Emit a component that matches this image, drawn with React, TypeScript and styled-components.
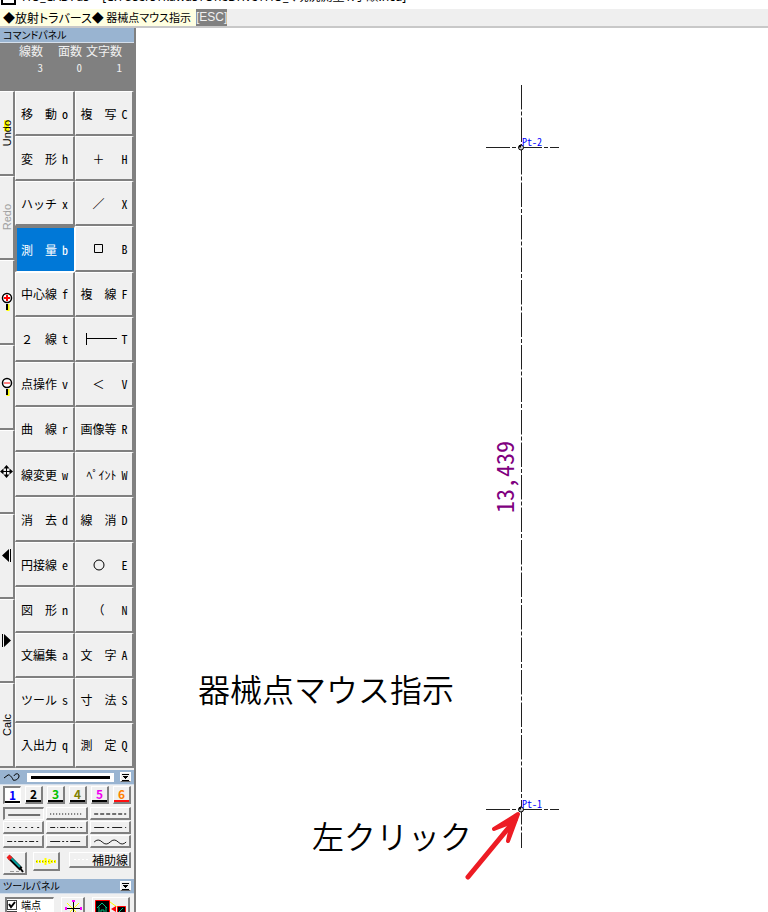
import React from "react";
import styled, { createGlobalStyle, css } from "styled-components";

const gothic = `"Noto Sans CJK JP", "Noto Sans", sans-serif`;

const GlobalStyle = createGlobalStyle`
  * { box-sizing: border-box; }
  body { margin: 0; background: #fff; color: #000; font: 12px/14px ${gothic}; }
  button, input { margin: 0; padding: 0; font: inherit; color: inherit; border-radius: 0; }
  svg { display: block; }
`;

const raised = css`
  border: solid;
  border-width: 1px 2px 2px 1px;
  border-color: #fff #808080 #808080 #fff;
  background: #f0f0f0;
`;

const sunken = css`
  border: solid;
  border-width: 2px 1px 1px 2px;
  border-color: #808080 #fff #fff #808080;
`;

const Window = styled.div`
  display: flex;
  flex-direction: column;
  height: 100vh;
  overflow: hidden;
`;

const TitleBar = styled.header`
  display: flex;
  align-items: flex-end;
  gap: 6px;
  flex: none;
  height: 9px;
  padding: 0 1px 4px;
  overflow: hidden;
  line-height: 16px;
  white-space: pre;
  font-family: "Noto Sans", ${gothic};
  font-size: 12px;
  font-feature-settings: "palt";
`;

const AppIcon = styled.span`
  flex: none;
  width: 15px;
  height: 15px;
  border: 2px solid #000;
`;

const StatusBar = styled.div`
  display: flex;
  flex: none;
  height: 19px;
  border-bottom: 2px solid #c8c8c8;
  background: #efefef;
  line-height: 17px;
  white-space: nowrap;
`;

const Prompt = styled.div`
  display: flex;
  justify-content: space-between;
  width: 196px;
  padding: 0 5px 0 3px;
  background: #ffffe1;
  font-feature-settings: "palt";
`;

const PromptText = styled.span`
  font-size: 11px;
`;

const EscapeButton = styled.button`
  border: 0;
  background: #808080;
  color: #f0f0f0;
  font-family: "Liberation Sans", sans-serif;
`;

const Workspace = styled.div`
  display: flex;
  flex: 1;
  min-height: 0;
`;

const Sidebar = styled.aside`
  display: flex;
  flex-direction: column;
  flex: none;
  width: 136px;
  border-right: 2px solid #808080;
  background: #f0f0f0;
`;

const PanelTitle = styled.div`
  display: flex;
  align-items: center;
  justify-content: space-between;
  flex: none;
  height: 15px;
  padding: 0 3px;
  border-bottom: 1px solid #d4dfec;
  background: #99b4d1;
  font-size: 10px;
  line-height: 14px;
  font-feature-settings: "palt";
`;

const Counts = styled.dl`
  display: grid;
  grid-template-columns: 43px 39px 40px;
  flex: none;
  align-content: start;
  height: 48px;
  margin: 0;
  background: #808080;
  color: #f0f0f0;
  text-align: right;
  line-height: 16px;
`;

const Count = styled.div`
  dt, dd { margin: 0; }
  dd { font-size: 11px; font-feature-settings: "hwid"; }
`;

const Commands = styled.div`
  display: flex;
  flex: none;
  height: 677px;
  background: #808080;
`;

const SideButtons = styled.div`
  display: grid;
  grid-auto-rows: 1fr;
  width: 15px;
`;

const SideButton = styled.button`
  ${raised}
  border-left: 0;
  display: flex;
  align-items: center;
  justify-content: center;
  min-height: 0;
  overflow: hidden;
  &:disabled { color: #a0a0a0; }
`;

const SideText = styled.span<{ $marked?: boolean }>`
  writing-mode: vertical-rl;
  transform: rotate(180deg);
  font: 11px/12px "Liberation Sans", sans-serif;
  ${(p) => p.$marked && css`background: linear-gradient(#ff0, #ff0) 4px 100% / 5px 11px no-repeat;`}
`;

const CommandGrid = styled.div`
  display: grid;
  grid-template-columns: 1fr 1fr;
  grid-auto-rows: 1fr;
  flex: 1;
`;

const CommandButton = styled.button<{ $active?: boolean }>`
  ${raised}
  display: flex;
  align-items: center;
  gap: 5px;
  min-width: 0;
  min-height: 0;
  padding: 1px 0 0 5px;
  white-space: pre;
  ${(p) => p.$active && css`${sunken} padding-left: 4px; background: #0078d7; color: #fff;`}
`;

const CommandLabel = styled.span<{ $align?: string }>`
  display: flex;
  justify-content: ${(p) => p.$align || "flex-start"};
  flex: none;
  width: 36px;
`;

const Key = styled.span`
  font-feature-settings: "hwid";
`;

const PenPanel = styled.section`
  flex: none;
  padding: 0 3px 4px;
`;

const PenTitle = styled(PanelTitle)`
  margin-top: 2px;
`;

const PenSample = styled.span`
  display: flex;
  align-items: center;
  flex: 1;
  height: 9px;
  margin: 0 6px;
  padding: 0 4px;
  background: #fff;
  &::after { content: ""; flex: 1; height: 3px; background: #000; }
`;

const Collapse = styled.button`
  display: grid;
  place-items: center;
  width: 11px;
  height: 10px;
  border: 1px solid #fff;
  border-bottom-color: #606060;
  background: #f0f0f0;
`;

const PenColors = styled.div`
  display: grid;
  grid-template-columns: repeat(6, 1fr);
  gap: 4px;
  padding: 1px 0 3px;
`;

const PenColor = styled.button<{ $color: string; $line: string; $active?: boolean }>`
  ${raised}
  ${(p) => p.$active && css`${sunken} background: #fff;`}
  display: flex;
  flex-direction: column;
  align-items: center;
  height: 18px;
  color: ${(p) => p.$color};
  font: bold 12px/13px ${gothic};
  &::after { content: ""; width: 15px; height: 2px; background: ${(p) => p.$line}; }
`;

const LineTypes = styled.div`
  display: grid;
  grid-template-columns: repeat(3, 1fr);
  gap: 1px 2px;
`;

const LineType = styled.button<{ $active?: boolean }>`
  ${raised}
  ${(p) => p.$active && sunken}
  height: 13px;
  svg { width: 100%; height: 10px; }
`;

const PenTools = styled.div`
  display: flex;
  align-items: flex-start;
  padding-top: 4px;
`;

const ToolButton = styled.button<{ $width: number; $height: number }>`
  ${raised}
  display: flex;
  align-items: center;
  justify-content: center;
  flex: none;
  width: ${(p) => p.$width}px;
  height: ${(p) => p.$height}px;
`;

const PenToolGap = styled.div`
  display: flex;
  align-items: flex-start;
  gap: 6px;
`;

const AuxButton = styled(ToolButton)`
  justify-content: space-between;
  margin-left: auto;
  padding: 0 1px 0 3px;
  line-height: 13px;
`;

const ToolRow = styled.section`
  display: flex;
  flex: none;
  align-items: flex-start;
  justify-content: space-between;
  padding: 3px 4px 0 5px;
`;

const SnapList = styled.div`
  ${sunken}
  width: 49px;
  height: 60px;
  background: #fff;
`;

const SnapOption = styled.label`
  display: flex;
  align-items: center;
  gap: 4px;
  height: 11px;
  font-size: 10px;
  line-height: 11px;
  input {
    appearance: none;
    flex: none;
    width: 10px;
    height: 10px;
    border: 1px solid #404040;
    background: #fff;
  }
`;

const CheckBox = styled.span`
  display: grid;
  input, svg { grid-area: 1 / 1; }
  svg { pointer-events: none; }
`;

const Canvas = styled.main`
  position: relative;
  flex: 1;
  min-width: 0;
  overflow: hidden;
  background: #fff;
`;

const Drawing = styled.svg`
  width: 100%;
  height: 100%;
  font-family: ${gothic};
  font-feature-settings: "hwid";
`;

const Note = styled.div<{ $x: number; $y: number }>`
  position: absolute;
  left: ${(p) => p.$x}px;
  top: ${(p) => p.$y}px;
  font-size: 32px;
  font-weight: 350;
  line-height: 40px;
  white-space: nowrap;
`;

const DimensionIcon = () => (
  <svg width="31" height="12" fill="none" stroke="#000"><path d="M.5 0v12M1 5.500h30" /></svg>
);

type Command = [label: React.ReactNode, key: string, align?: string];

const commands: Command[] = [
  ["移　動", "o"], ["複　写", "C"],
  ["変　形", "h"], ["＋", "H", "center"],
  ["ハッチ", "x"], ["／", "X", "center"],
  ["測　量", "b"], [<svg width="11" height="11" fill="none" stroke="#000"><path d="M1.500 1.500h8v8h-8z" /></svg>, "B", "center"],
  ["中心線", "f"], ["複　線", "F"],
  ["２　線", "t"], [<DimensionIcon />, "T", "flex-end"],
  ["点操作", "v"], ["＜", "V", "center"],
  ["曲　線", "r"], ["画像等", "R"],
  ["線変更", "w"], ["ﾍﾟｲﾝﾄ", "W", "flex-end"],
  ["消　去", "d"], ["線　消", "D"],
  ["円接線", "e"], [<svg width="12" height="12" fill="none" stroke="#000"><circle cx="6" cy="6" r="5" /></svg>, "E", "center"],
  ["図　形", "n"], ["（", "N", "center"],
  ["文編集", "a"], ["文　字", "A"],
  ["ツール", "s"], ["寸　法", "S"],
  ["入出力", "q"], ["測　定", "Q"],
];

const Magnifier = ({ plus }: { plus?: boolean }) => (
  <svg width="12" height="20" fill="none">
    <path d="M7 12v7" stroke="#ff0" strokeWidth="3" />
    <path d="M6 12v6" stroke="#000" strokeWidth="2" />
    <circle cx="6" cy="6" r="4.500" fill="#fff" stroke="#000" strokeWidth="1.500" />
    <path d={plus ? "M3 6h6M6 3v6" : "M3 6h6"} stroke="#f00" strokeWidth={plus ? 2 : 1} />
  </svg>
);

const MoveIcon = () => (
  <svg width="13" height="13">
    <path d="M6.500 1v11M1 6.500h11" stroke="#000" />
    <path d="M6.500 0L9.500 3.500h-6zM6.500 13l3-3.500h-6zM0 6.500l3.500-3v6zM13 6.500l-3.500-3v6z" />
  </svg>
);

const StepIcon = ({ forward }: { forward?: boolean }) => (
  <svg width="9" height="13">
    {forward ? <path d="M0 0h1v13H0zM2 0l7 6.500L2 13z" /> : <path d="M8 0h1v13H8zM7 0L0 6.500 7 13z" />}
  </svg>
);

const sideButtons: { name: string; face: React.ReactNode; disabled?: boolean }[] = [
  { name: "Undo", face: <SideText $marked>Undo</SideText> },
  { name: "Redo", face: <SideText>Redo</SideText>, disabled: true },
  { name: "拡大", face: <Magnifier plus /> },
  { name: "縮小", face: <Magnifier /> },
  { name: "移動", face: <MoveIcon /> },
  { name: "前", face: <StepIcon /> },
  { name: "次", face: <StepIcon forward /> },
  { name: "Calc", face: <SideText>Calc</SideText> },
];

const pens = [
  ["#0000ff", "#000"], ["#000", "#000"], ["#00c000", "#000"],
  ["#808000", "#000"], ["#f000f0", "#000"], ["#ff8000", "#ff1010"],
];

const lineDashes = ["", "1 2", "4 2", "2 4", "5 2 1 2", "10 3 2 3", "5 2 2 2", "10 2 2 2 2 2"];

const CollapseIcon = () => (
  <svg width="7" height="7" fill="none" stroke="#000"><path d="M0 .5h7M0 6.500h7M1 2.500h5M2 3.500h3M3 4.500h1" /></svg>
);

const PointMark = ({ y, name }: { y: number; name: string }) => (
  <g>
    <path d={`M350 ${y}h73`} stroke="#202020" strokeDasharray="24 2 4 2" />
    <circle cx="385" cy={y} r="2.500" fill="#ccc" stroke="#000" />
    <path d={`M383 ${y}v-2l2-1v3z`} fill="#000" />
    <text x="386" y={y - 2} fontSize="10" fill="#00f">{name}</text>
  </g>
);

export default function App() {
  return (
    <Window>
      <GlobalStyle />
      <TitleBar>
        <AppIcon />
        <span>HO_CAD7as  - [C:¥Users¥kawas¥OneDrive¥HO_く現況測量1.手順.hcd]</span>
      </TitleBar>
      <StatusBar>
        <Prompt><span>◆放射トラバース◆</span><PromptText>器械点マウス指示</PromptText></Prompt>
        <EscapeButton>[ESC]</EscapeButton>
      </StatusBar>
      <Workspace>
        <Sidebar>
          <PanelTitle>コマンドパネル</PanelTitle>
          <Counts>
            <Count><dt>線数</dt><dd>3</dd></Count>
            <Count><dt>面数</dt><dd>0</dd></Count>
            <Count><dt>文字数</dt><dd>1</dd></Count>
          </Counts>
          <Commands>
            <SideButtons>
              {sideButtons.map((b) => (
                <SideButton key={b.name} aria-label={b.name} disabled={b.disabled}>{b.face}</SideButton>
              ))}
            </SideButtons>
            <CommandGrid>
              {commands.map(([label, key, align]) => (
                <CommandButton key={key} $active={key === "b"}>
                  <CommandLabel $align={align}>{label}</CommandLabel>
                  <Key>{key}</Key>
                </CommandButton>
              ))}
            </CommandGrid>
          </Commands>
          <PenTitle>
            <svg width="18" height="10" fill="none" stroke="#000">
              <path d="M1 6l4-3c2-1 5 4 5 5 2 1 6-1 6-4s-4-3-5 0" />
            </svg>
            <PenSample />
            <Collapse aria-label="ペンパネル"><CollapseIcon /></Collapse>
          </PenTitle>
          <PenPanel>
            <PenColors>
              {pens.map(([color, line], i) => (
                <PenColor key={color} $color={color} $line={line} $active={i === 0}>{i + 1}</PenColor>
              ))}
            </PenColors>
            <LineTypes>
              {lineDashes.map((dash, i) => (
                <LineType key={i} $active={i === 0} aria-label={`線種${i + 1}`}>
                  <svg viewBox="0 0 38 10" fill="none" stroke={i < 3 ? "#707070" : "#202020"} strokeWidth={i < 3 ? 2 : 1}>
                    <path d={i < 3 ? "M3 6h32" : "M3 5.500h32"} strokeDasharray={dash || undefined} />
                  </svg>
                </LineType>
              ))}
              <LineType aria-label="線種9">
                <svg viewBox="0 0 38 10" fill="none" stroke="#202020">
                  <path d="M3 6q4-4 8 0t8 0 8 0 8 0" />
                </svg>
              </LineType>
            </LineTypes>
            <PenTools>
              <PenToolGap>
                <ToolButton $width={24} $height={23} aria-label="ペン">
                  <svg width="20" height="20" fill="none">
                    <path d="M4 4l12 12" stroke="#000" strokeWidth="4" />
                    <path d="M6 5l9 9" stroke="#00a0a0" strokeWidth="2" />
                    <path d="M3 3l3 3" stroke="#f02020" strokeWidth="4" />
                    <path d="M15 15l3 4" stroke="#000" strokeWidth="2" />
                    <path d="M5 18.500h9" stroke="#999" strokeDasharray="4 2" />
                  </svg>
                </ToolButton>
                <ToolButton $width={27} $height={19} aria-label="線強調">
                  <svg width="23" height="9" fill="none" stroke="#ff0">
                    <path d="M1 4.500h21" strokeWidth="3" strokeDasharray="2 1" />
                    <path d="M10.500 1v7M14.500 2v5" strokeWidth="2" />
                    <path d="M1 4.500h21" stroke="#a0a000" strokeDasharray="1 2" />
                  </svg>
                </ToolButton>
              </PenToolGap>
              <AuxButton $width={62} $height={16}>
                <svg width="16" height="3" fill="none" stroke="#fff"><path d="M1 1.500h15" strokeDasharray="2 2" /></svg>
                <span>補助線</span>
              </AuxButton>
            </PenTools>
          </PenPanel>
          <PanelTitle>
            <span>ツールパネル</span>
            <Collapse aria-label="ツールパネル"><CollapseIcon /></Collapse>
          </PanelTitle>
          <ToolRow>
            <SnapList>
              {["端点", "交点"].map((name, i) => (
                <SnapOption key={name}>
                  <CheckBox>
                    <input type="checkbox" defaultChecked={i === 0} />
                    {i === 0 && <svg width="10" height="10" fill="none" stroke="#000" strokeWidth="2"><path d="M2 4l2 3 4-5" /></svg>}
                  </CheckBox>
                  {name}
                </SnapOption>
              ))}
            </SnapList>
            <ToolButton $width={24} $height={24} aria-label="点">
              <svg width="20" height="20" fill="none">
                <path d="M4 4l12 12M16 4L4 16" stroke="#ff0" />
                <path d="M10.500 3v14M3 9.500h15" stroke="#000" />
                <path d="M9 2h3M9 17h3M3 8v3M18 8v3" stroke="#f0f" strokeWidth="2" />
              </svg>
            </ToolButton>
            <ToolButton $width={38} $height={24} aria-label="図形登録">
              <svg width="32" height="20" fill="none">
                <path d="M.5 1.500h14v16H.5z" fill="#000" stroke="#f00" />
                <path d="M2 9l5-5 5 5M4 8v7h7V8M6 15v-4h3v4" stroke="#00c080" />
                <path d="M15 3l7 5" stroke="#ff0" />
                <path d="M16 10l5-3v6z" fill="#f00" />
                <path d="M22.500 7.500h8v8h-8z" fill="#000" stroke="#f00" />
                <path d="M24 13l4-4" stroke="#00c080" />
              </svg>
            </ToolButton>
          </ToolRow>
        </Sidebar>
        <Canvas>
          <Drawing>
            <path d="M385.500 57v763" stroke="#202020" strokeDasharray="24.500 2 4 2" />
            <PointMark y={119.5} name="Pt-2" />
            <PointMark y={781.5} name="Pt-1" />
            <text transform="translate(378 485) rotate(-90)" fontSize="24" fill="#800080">13,439</text>
            <path d="M332 849l47-57" stroke="#ed1c24" strokeWidth="5" strokeLinecap="round" />
            <path d="M358 801l24-15-10 27 4-19z" fill="#ed1c24" stroke="#ed1c24" strokeWidth="4" strokeLinejoin="round" />
          </Drawing>
          <Note $x={62} $y={640}>器械点マウス指示</Note>
          <Note $x={176} $y={787}>左クリック</Note>
        </Canvas>
      </Workspace>
    </Window>
  );
}
